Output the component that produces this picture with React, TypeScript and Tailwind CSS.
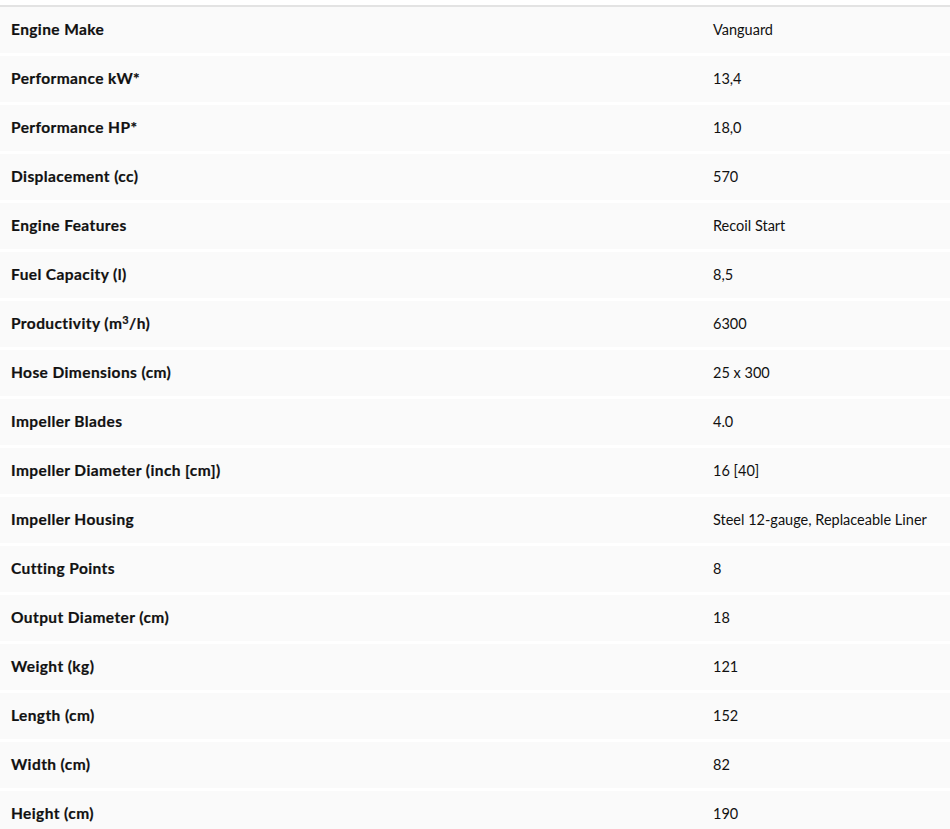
import React from "react";

const rows: [React.ReactNode, string][] = [
  ["Engine Make", "Vanguard"],
  ["Performance kW*", "13,4"],
  ["Performance HP*", "18,0"],
  ["Displacement (cc)", "570"],
  ["Engine Features", "Recoil Start"],
  ["Fuel Capacity (l)", "8,5"],
  [
    <>
      Productivity (m<span className="text-[11px] align-[5px] leading-none">3</span>/h)
    </>,
    "6300",
  ],
  ["Hose Dimensions (cm)", "25 x 300"],
  ["Impeller Blades", "4.0"],
  ["Impeller Diameter (inch [cm])", "16 [40]"],
  ["Impeller Housing", "Steel 12-gauge, Replaceable Liner"],
  ["Cutting Points", "8"],
  ["Output Diameter (cm)", "18"],
  ["Weight (kg)", "121"],
  ["Length (cm)", "152"],
  ["Width (cm)", "82"],
  ["Height (cm)", "190"],
];

export default function App() {
  return (
    <div className="w-[950px] h-[829px] overflow-hidden bg-white pt-[5px] font-['Lato',sans-serif] text-[#111]">
      <div className="border-t-2 border-[#e3e3e3] flex flex-col gap-[3px]">
        {rows.map(([label, value], i) => (
          <div key={i} className="grid grid-cols-[702px_1fr] h-[46px] items-center bg-[#fafafa]">
            <div className="pl-[11px] text-[15.5px] font-bold tracking-[0.4px] leading-[20px] -mt-[2px] [-webkit-text-stroke:0.2px_#111]">{label}</div>
            <div className="pl-[11px] text-[14.5px] font-normal">{value}</div>
          </div>
        ))}
      </div>
    </div>
  );
}
